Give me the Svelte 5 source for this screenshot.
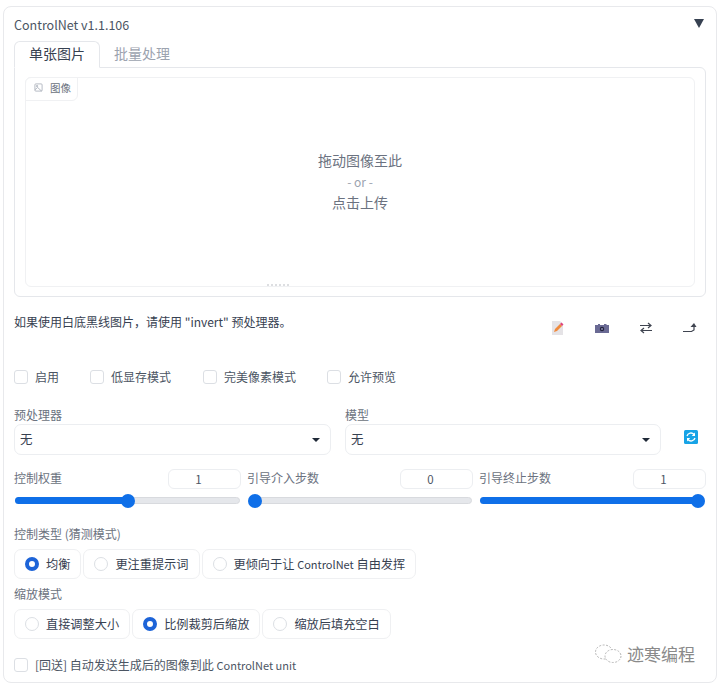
<script>
  const checks = ['启用', '低显存模式', '完美像素模式', '允许预览'];
  const sliders = [
    { label: '控制权重', value: 1, pct: 50 },
    { label: '引导介入步数', value: 0, pct: 0 },
    { label: '引导终止步数', value: 1, pct: 100 }
  ];
  const controlTypes = [
    { text: '均衡', on: true },
    { text: '更注重提示词', on: false }
  ];
  const resizeModes = [
    { text: '直接调整大小', on: false },
    { text: '比例裁剪后缩放', on: true },
    { text: '缩放后填充空白', on: false }
  ];
</script>

<main>
  <section class="panel">
    <header class="head">
      <span>ControlNet v1.1.106</span>
      <span class="caret"></span>
    </header>

    <nav class="tabs">
      <button class="tab active">单张图片</button>
      <button class="tab">批量处理</button>
    </nav>

    <div class="tabbody">
      <div class="drop">
        <div class="badge">
          <svg width="9" height="9" viewBox="0 0 10 10" fill="none" stroke="#9ca3af" stroke-width="0.8">
            <rect x="1" y="1" width="8" height="8" rx="1" />
            <circle cx="3.400" cy="3.400" r="0.800" />
            <path d="M1 7.500 4 5l4.500 4" />
          </svg>
          <span>图像</span>
        </div>
        <div class="droptext">
          <div>拖动图像至此</div>
          <div class="or">- or -</div>
          <div>点击上传</div>
        </div>
        <div class="grip"></div>
      </div>
    </div>

    <div class="hintrow">
      <p>如果使用白底黑线图片，请使用 "invert" 预处理器。</p>
      <div class="tools">
        <span class="tool">
          <svg width="16" height="16" viewBox="0 0 16 16">
            <path d="M2 1h8l3 3v11H2z" fill="#e5e3e6" />
            <path d="M4 12l1-3 5-5 2 2-5 5z" fill="#f08a3c" />
            <path d="M10 4l1.500-1.500 2 2L12 6z" fill="#e0447c" />
          </svg>
        </span>
        <span class="tool">
          <svg width="16" height="16" viewBox="0 0 16 16">
            <path d="M1 5h3V4h2v1h4V4h2.500v1H15v8H1z" fill="#6a6a94" />
            <circle cx="8" cy="9" r="2.200" fill="#24243c" />
            <circle cx="8" cy="9" r="1" fill="#8a8ab0" />
          </svg>
        </span>
        <span class="tool">
          <svg width="16" height="16" viewBox="0 0 16 16" fill="none" stroke="#3f4450" stroke-width="1.200">
            <path d="M2 5.500h11M10 3l3 2.500L10 8" />
            <path d="M14 10.500H3M6 8l-3 2.500L6 13" />
          </svg>
        </span>
        <span class="tool">
          <svg width="16" height="16" viewBox="0 0 16 16">
            <path d="M1 11.500h8.500L12 10V6" fill="none" stroke="#3f4450" stroke-width="1.200" />
            <path d="M8.500 7 12 3l2.500 4z" fill="#3f4450" />
          </svg>
        </span>
      </div>
    </div>

    <div class="checks">
      {#each checks as c}
        <label class="check"><span class="box"></span>{c}</label>
      {/each}
    </div>

    <div class="selects">
      <div class="field">
        <div class="lbl">预处理器</div>
        <div class="select">无<span class="arrow"></span></div>
      </div>
      <div class="field">
        <div class="lbl">模型</div>
        <div class="select">无<span class="arrow"></span></div>
      </div>
      <div class="refresh">
        <svg width="14" height="14" viewBox="0 0 14 14">
          <rect width="14" height="14" rx="1.500" fill="#17a3e6" />
          <path d="M3 6a4 4 0 0 1 7-1.500M11 8a4 4 0 0 1-7 1.500" fill="none" stroke="#fff" stroke-width="1.300" />
          <path d="M11 2.500V6H7.800zM3 11.500V8h3.200z" fill="#fff" />
        </svg>
      </div>
    </div>

    <div class="sliders">
      {#each sliders as s}
        <div class="slider">
          <div class="sliderhead">
            <span class="lbl">{s.label}</span>
            <span class="num">{s.value}</span>
          </div>
          <div class="track">
            <div class="fill" style="width: {s.pct}%"></div>
            <div class="thumb" style="left: {s.pct}%"></div>
          </div>
        </div>
      {/each}
    </div>

    <div class="lbl grouplbl first">控制类型 (猜测模式)</div>
    <div class="radios one">
      {#each controlTypes as r}
        <label class="radio"><span class="dot" class:on={r.on}></span>{r.text}</label>
      {/each}
      <label class="radio"><span class="dot"></span><span>更倾向于让 <span class="latin">ControlNet</span> 自由发挥</span></label>
    </div>

    <div class="lbl grouplbl second">缩放模式</div>
    <div class="radios two">
      {#each resizeModes as r}
        <label class="radio"><span class="dot" class:on={r.on}></span>{r.text}</label>
      {/each}
    </div>

    <label class="check loop"><span class="box"></span><span>[回送] 自动发送生成后的图像到此 <span class="latin">ControlNet unit</span></span></label>

    <div class="watermark">
      <svg width="30" height="20" viewBox="0 0 30 20" fill="none" stroke="#b5b5b5" stroke-width="1" stroke-dasharray="2 1.500">
        <ellipse cx="10" cy="8" rx="8.500" ry="7" />
        <ellipse cx="19" cy="12" rx="8" ry="6.500" fill="#fff" />
      </svg>
      <span>迹寒编程</span>
    </div>
  </section>
</main>

<style>
  :global(body) {
    margin: 0;
    background: #fff;
  }
  main {
    width: 720px;
    height: 685px;
    padding: 6px 3px 2px 3px;
    box-sizing: border-box;
    font-family: "Noto Sans CJK SC", "Noto Sans", sans-serif;
    color: #4b5563;
    font-size: 12px;
  }
  .panel {
    position: relative;
    height: 677px;
    box-sizing: border-box;
    border: 1px solid #e8e9ec;
    border-radius: 8px;
    padding: 0 10px;
  }
  .head {
    height: 34px;
    display: flex;
    justify-content: space-between;
    align-items: center;
    font-size: 12.500px;
    box-sizing: border-box;
    color: #4b5563;
  }
  .caret {
    width: 0;
    height: 0;
    border-left: 5px solid transparent;
    border-right: 5px solid transparent;
    border-top: 9px solid #374151;
    margin-right: 2px;
    margin-bottom: 1px;
  }
  .tabs {
    display: flex;
    height: 27px;
    margin-bottom: -1px;
  }
  .tab {
    width: 86px;
    height: 27px;
    padding: 0 0 3px;
    margin: 0;
    background: none;
    border: 1px solid transparent;
    font: inherit;
    font-size: 14px;
    color: #9ca3af;
  }
  .tab.active {
    color: #374151;
    background: #fff;
    border-color: #e5e7eb;
    border-bottom-color: #fff;
    border-radius: 6px 6px 0 0;
    position: relative;
    z-index: 1;
  }
  .tab:not(.active) {
    width: 84px;
  }
  .tabbody {
    height: 230px;
    box-sizing: border-box;
    border: 1px solid #e5e7eb;
    border-radius: 0 6px 6px 6px;
    padding: 9px 10px;
  }
  .drop {
    position: relative;
    height: 100%;
    box-sizing: border-box;
    border: 1px solid #f0f1f3;
    border-radius: 6px;
    display: flex;
    align-items: center;
    justify-content: center;
  }
  .badge {
    position: absolute;
    left: -1px;
    top: -1px;
    width: 53px;
    height: 24px;
    box-sizing: border-box;
    padding: 0 0 3px 8px;
    display: flex;
    align-items: center;
    gap: 7px;
    font-size: 10.500px;
    color: #6b7280;
    background: #fff;
    border: 1px solid #f0f1f3;
    border-radius: 6px 0 6px 0;
  }
  .droptext {
    text-align: center;
    font-size: 14px;
    line-height: 21px;
    color: #6b7280;
    margin-top: -2px;
  }
  .or {
    font-size: 12px;
    color: #9ca3af;
  }
  .grip {
    position: absolute;
    left: 240px;
    bottom: 0;
    width: 24px;
    height: 2px;
    background: radial-gradient(circle, #c4c7cc 0.5px, transparent 1px) 0 0 / 4px 2px;
  }
  .hintrow {
    height: 65px;
    display: flex;
    justify-content: space-between;
    align-items: flex-start;
  }
  .hintrow p {
    margin: 17px 0 0;
    font-size: 12px;
    line-height: 16px;
    color: #374151;
  }
  .tools {
    display: flex;
    gap: 28px;
    margin-top: 23px;
    margin-right: 8px;
  }
  .tool {
    width: 16px;
    height: 16px;
    display: block;
  }
  .checks {
    display: flex;
    height: 29px;
    align-items: center;
  }
  .check {
    display: flex;
    align-items: center;
    gap: 7px;
    font-size: 12px;
    color: #4b5563;
  }
  .checks .check:nth-child(1) { width: 76px; }
  .checks .check:nth-child(2) { width: 113px; }
  .checks .check:nth-child(3) { width: 124px; }
  .box {
    width: 12px;
    height: 12px;
    border: 1px solid #dcdfe4;
    border-radius: 3px;
    background: #fff;
  }
  .selects {
    display: flex;
    gap: 14px;
    margin-top: 16px;
  }
  .field {
    flex: none;
    width: 317px;
  }
  .field + .field {
    width: 316px;
  }
  .lbl {
    font-size: 12px;
    line-height: 16px;
    color: #6b7280;
  }
  .select {
    position: relative;
    height: 31px;
    margin-top: 1px;
    box-sizing: border-box;
    border: 1px solid #eceef1;
    border-radius: 7px;
    padding-left: 5px;
    line-height: 28px;
    font-size: 12.500px;
    color: #374151;
  }
  .arrow {
    position: absolute;
    right: 10px;
    top: 13px;
    border-left: 4px solid transparent;
    border-right: 4px solid transparent;
    border-top: 4px solid #1f2937;
  }
  .refresh {
    flex: none;
    width: 14px;
    height: 14px;
    margin: 23px 0 0 9px;
  }
  .sliders {
    display: grid;
    grid-template-columns: 227px 226px 227px;
    gap: 6px;
    margin-top: 14px;
  }
  .sliderhead {
    height: 20px;
    display: flex;
    justify-content: space-between;
    align-items: center;
  }
  .sliderhead .lbl {
    margin-top: -2px;
  }
  .num {
    width: 73px;
    height: 20px;
    box-sizing: border-box;
    border: 1px solid #eceef1;
    border-radius: 6px;
    padding-right: 12px;
    text-align: center;
    font-size: 11.500px;
    line-height: 19px;
    color: #4b5563;
  }
  .track {
    position: relative;
    height: 5px;
    margin: 8px 1px 0;
    background: #e5e7eb;
    border: 1px solid #d8dade;
    border-radius: 4px;
  }
  .fill {
    position: absolute;
    left: -1px;
    top: -1px;
    height: 7px;
    background: #0f6fe8;
    border-radius: 4px;
  }
  .thumb {
    position: absolute;
    top: 2.500px;
    width: 14px;
    height: 14px;
    margin: -7px 0 0 -7px;
    background: #0f6fe8;
    border-radius: 50%;
  }
  .slider:nth-child(2) .thumb { margin-left: -1px; }
  .slider:nth-child(3) .thumb { margin-left: -13px; }
  .grouplbl.first {
    margin-top: 22px;
  }
  .grouplbl.second {
    margin-top: 7px;
  }
  .radios {
    display: flex;
    gap: 2px;
  }
  .radios.one {
    margin-top: 7px;
  }
  .radios.two {
    margin-top: 7px;
  }
  .radio {
    height: 30px;
    box-sizing: border-box;
    display: flex;
    align-items: center;
    gap: 7px;
    padding: 0 10px;
    border: 1px solid #eff0f2;
    border-radius: 7px;
    font-size: 12.200px;
    color: #374151;
    white-space: nowrap;
  }
  .latin {
    font-size: 11px;
  }
  .dot {
    width: 12px;
    height: 12px;
    border: 1px solid #dcdfe4;
    border-radius: 50%;
    background: #fff;
    box-sizing: content-box;
  }
  .dot.on {
    width: 6px;
    height: 6px;
    background: #fff;
    border: 4px solid #1d64d8;
  }
  .loop {
    margin-top: 17px;
  }
  .watermark {
    position: absolute;
    left: 590px;
    top: 635px;
    display: flex;
    align-items: center;
    gap: 3px;
    font-size: 17px;
    line-height: 24px;
    color: #8a8a8a;
  }
</style>
